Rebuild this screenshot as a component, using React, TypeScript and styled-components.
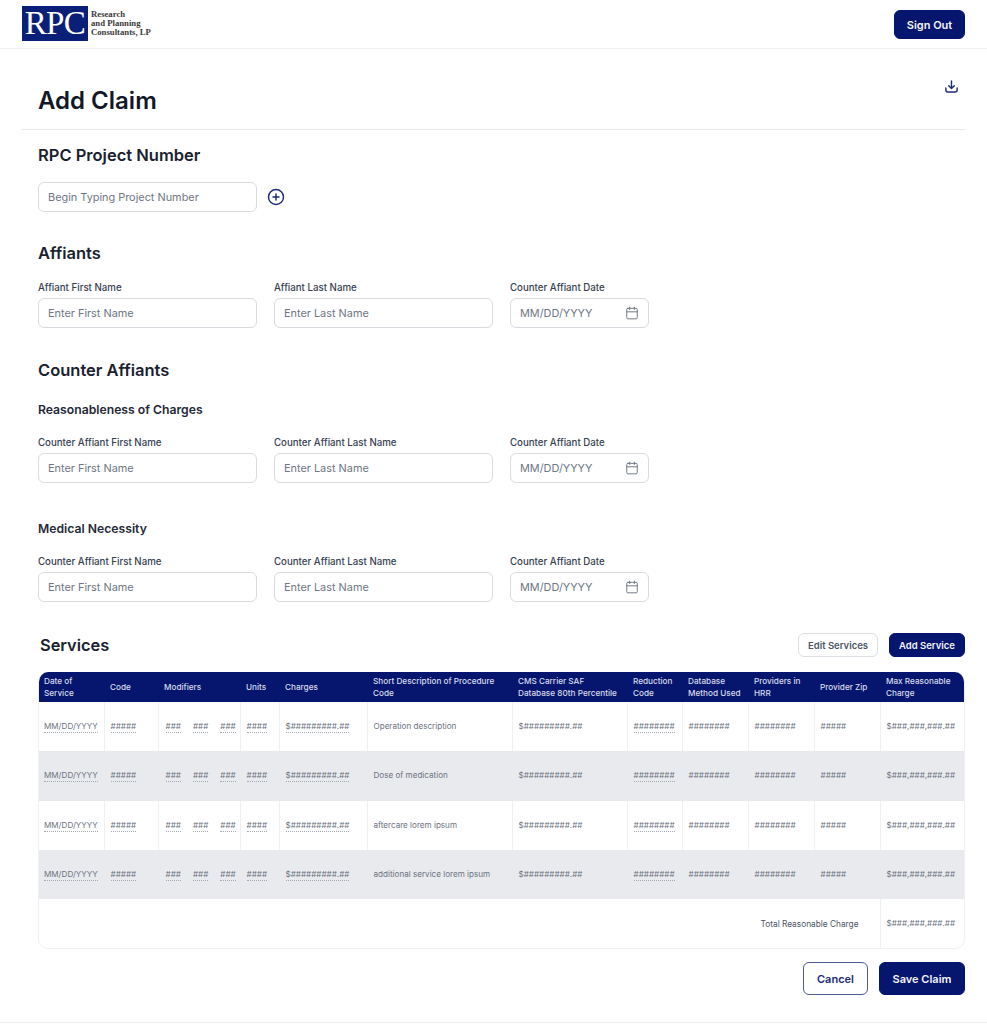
import React from 'react';
import styled, {createGlobalStyle} from 'styled-components';
import {Calendar, CirclePlus} from 'lucide-react';

const NAVY = '#06166e';

const GlobalStyle = createGlobalStyle`
  html, body { margin: 0; padding: 0; background: #fff; }
  body { font-family: Inter, "Noto Sans", sans-serif; color: #111827; }
  * { box-sizing: border-box; }
`;

const COLUMNS = [66, 54, 82, 39, 88, 145, 115, 55, 66, 66, 66, 85];

const HEADERS = [
  'Date of Service',
  'Code',
  'Modifiers',
  'Units',
  'Charges',
  'Short Description of Procedure Code',
  'CMS Carrier SAF Database 80th Percentile',
  'Reduction Code',
  'Database Method Used',
  'Providers in HRR',
  'Provider Zip',
  'Max Reasonable Charge',
];

const ROWS = [
  'Operation description',
  'Dose of medication',
  'aftercare lorem ipsum',
  'additional service lorem ipsum',
];

const TopBar = styled.header`
  height: 49px;
  padding: 1px 22px 0;
  display: flex;
  align-items: center;
  justify-content: space-between;
  border-bottom: 1px solid #f1f2f4;
`;

const Logo = styled.div`
  display: flex;
  align-items: center;
  gap: 3px;
  margin-top: -2px;
`;

const LogoMark = styled.div`
  width: 66px;
  height: 35px;
  background: #0a1f78;
  color: #fff;
  font: 400 33px/35px 'Liberation Serif', serif;
  text-align: center;
  letter-spacing: -0.6px;
`;

const LogoText = styled.div`
  font: 700 8.7px/9px 'Liberation Serif', serif;
  color: #3a3a3a;
  white-space: nowrap;
`;

const Button = styled.button<{$variant?: 'primary' | 'outline' | 'plain'; $w: number; $h: number; $size: number}>`
  width: ${p => p.$w}px;
  height: ${p => p.$h}px;
  padding: 0;
  border-radius: 6px;
  font-family: Inter, sans-serif;
  font-weight: 600;
  font-size: ${p => p.$size}px;
  background: ${p => (p.$variant === 'primary' || !p.$variant ? NAVY : '#fff')};
  color: ${p =>
    p.$variant === 'outline' ? '#1c2a78' : p.$variant === 'plain' ? '#4b5563' : '#f3f4fa'};
  border: 1px solid
    ${p => (p.$variant === 'outline' ? '#4f5a98' : p.$variant === 'plain' ? '#dcdfe4' : NAVY)};
`;

const Main = styled.main`
  padding: 0 22px;
`;

const TitleRow = styled.div`
  height: 81px;
  padding: 0 6px 0 16px;
  display: flex;
  align-items: center;
  justify-content: space-between;
  border-bottom: 1px solid #e8eaed;
`;

const PageTitle = styled.h1`
  margin: 24px 0 0;
  font-size: 24px;
  line-height: 32px;
  font-weight: 600;
  color: #111827;
`;

const ExportIcon = styled.svg`
  width: 15px;
  height: 15px;
  margin: 0 0 6px;
  color: #1c2a78;
`;

const Content = styled.div`
  padding: 0 0 0 16px;
`;

const SectionTitle = styled.h2<{$top: number}>`
  margin: ${p => p.$top}px 0 0;
  font-size: 16.5px;
  line-height: 22px;
  font-weight: 600;
  color: #1a2230;
`;

const SubTitle = styled.h3<{$top: number}>`
  margin: ${p => p.$top}px 0 0;
  font-size: 12.2px;
  line-height: 18px;
  font-weight: 600;
  color: #1f2937;
`;

const ProjectRow = styled.div`
  margin-top: 16px;
  display: flex;
  align-items: center;
  gap: 10px;
  color: #1c2a78;
`;

const FieldRow = styled.div<{$top: number}>`
  margin-top: ${p => p.$top}px;
  display: flex;
  gap: 17px;
`;

const Field = styled.label`
  display: flex;
  flex-direction: column;
  gap: 3px;
`;

const FieldLabel = styled.span`
  font-size: 9.7px;
  line-height: 14px;
  font-weight: 500;
  color: #374151;
`;

const InputBox = styled.div<{$w: number}>`
  position: relative;
  width: ${p => p.$w}px;
  height: 30px;
  color: #6b7280;
`;

const Input = styled.input`
  width: 100%;
  height: 100%;
  padding: 0 9px;
  border: 1px solid #d8dbe0;
  border-radius: 6px;
  background: #fff;
  font-family: Inter, sans-serif;
  font-size: 10.9px;
  color: #111827;
  &::placeholder {
    color: #6f7785;
    opacity: 1;
  }
`;

const InputIcon = styled.span`
  position: absolute;
  top: 8px;
  right: 10px;
  display: flex;
`;

const ServicesHead = styled.div`
  margin-top: 31px;
  height: 24px;
  display: flex;
  align-items: center;
  gap: 11px;
`;

const ServicesTitle = styled.h2`
  margin: 0 auto 0 2px;
  font-size: 16.4px;
  line-height: 24px;
  font-weight: 600;
  color: #1a2230;
`;

const TableWrap = styled.div`
  margin-top: 15px;
  border: 1px solid #eef0f2;
  border-top: 0;
  border-radius: 10px;
  overflow: hidden;
`;

const Table = styled.table`
  width: 927px;
  margin: 0 -1px;
  table-layout: fixed;
  border-collapse: collapse;
`;

const HeadCell = styled.th`
  height: 30px;
  padding: 0 6px;
  background: ${NAVY};
  color: #d9dcec;
  font-size: 8.2px;
  line-height: 12.5px;
  font-weight: 500;
  text-align: left;
`;

const BodyRow = styled.tr<{$shaded?: boolean}>`
  height: 49.3px;
  background: ${p => (p.$shaded ? '#e9eaee' : '#fff')};
`;

const Cell = styled.td<{$tint?: boolean}>`
  padding: 0 6px 1px;
  font-size: 8.1px;
  color: #6b7280;
  white-space: nowrap;
  border-left: 1px solid ${p => (p.$tint ? '#e9eaee' : '#eef0f2')};
  &:first-child {
    border-left: 0;
  }
`;

const Editable = styled.span`
  padding-bottom: 1px;
  border-bottom: 1px dotted #a3a9b5;
`;

const Modifiers = styled.div`
  margin: 2px 0 0 1px;
  display: flex;
  gap: 12px;
`;

const TotalLabel = styled.td`
  padding-right: 21px;
  font-size: 8.3px;
  color: #4b5563;
  text-align: right;
`;

const Actions = styled.div`
  margin-top: 13px;
  display: flex;
  justify-content: flex-end;
  gap: 11px;
`;

const PageEnd = styled.div`
  margin-top: 27px;
  border-bottom: 1px solid #eceef0;
`;

const DateField = ({label}: {label: string}) => (
  <Field>
    <FieldLabel>{label}</FieldLabel>
    <InputBox $w={139}>
      <Input placeholder="MM/DD/YYYY" />
      <InputIcon>
        <Calendar size={14} strokeWidth={1.6} />
      </InputIcon>
    </InputBox>
  </Field>
);

const TextField = ({label, placeholder}: {label: string; placeholder: string}) => (
  <Field>
    <FieldLabel>{label}</FieldLabel>
    <InputBox $w={219}>
      <Input placeholder={placeholder} />
    </InputBox>
  </Field>
);

const NameFields = ({prefix, top}: {prefix: string; top: number}) => (
  <FieldRow $top={top}>
    <TextField label={`${prefix} First Name`} placeholder="Enter First Name" />
    <TextField label={`${prefix} Last Name`} placeholder="Enter Last Name" />
    <DateField label="Counter Affiant Date" />
  </FieldRow>
);

const ServiceRow = ({description, shaded}: {description: string; shaded: boolean}) => (
  <BodyRow $shaded={shaded}>
    <Cell $tint={shaded}><Editable>MM/DD/YYYY</Editable></Cell>
    <Cell $tint={shaded}><Editable>#####</Editable></Cell>
    <Cell $tint={shaded}>
      <Modifiers>
        <Editable>###</Editable>
        <Editable>###</Editable>
        <Editable>###</Editable>
      </Modifiers>
    </Cell>
    <Cell $tint={shaded}><Editable>####</Editable></Cell>
    <Cell $tint={shaded}><Editable>$#########.##</Editable></Cell>
    <Cell $tint={shaded}>{description}</Cell>
    <Cell $tint={shaded}>$#########.##</Cell>
    <Cell $tint={shaded}><Editable>########</Editable></Cell>
    <Cell $tint={shaded}>########</Cell>
    <Cell $tint={shaded}>########</Cell>
    <Cell $tint={shaded}>#####</Cell>
    <Cell $tint={shaded}>$###,###,###.##</Cell>
  </BodyRow>
);

export default function App() {
  return (
    <>
      <GlobalStyle />
      <TopBar>
        <Logo>
          <LogoMark>RPC</LogoMark>
          <LogoText>
            Research
            <br />
            and Planning
            <br />
            Consultants, LP
          </LogoText>
        </Logo>
        <Button $w={71} $h={29} $size={11}>Sign Out</Button>
      </TopBar>
      <Main>
        <TitleRow>
          <PageTitle>Add Claim</PageTitle>
          <ExportIcon viewBox="0 0 16 16" fill="none" stroke="currentColor" strokeWidth="1.5" strokeLinecap="round" strokeLinejoin="round">
            <path d="M8 2v8M5 7.2 8 10.2l3-3" />
            <path d="M2 9.5v2.3A2 2 0 0 0 4 13.8h8a2 2 0 0 0 2-2V9.5" />
          </ExportIcon>
        </TitleRow>
        <Content>
          <SectionTitle $top={14}>RPC Project Number</SectionTitle>
          <ProjectRow>
            <InputBox $w={219}>
              <Input placeholder="Begin Typing Project Number" />
            </InputBox>
            <CirclePlus size={18} strokeWidth={1.9} />
          </ProjectRow>

          <SectionTitle $top={30}>Affiants</SectionTitle>
          <FieldRow $top={17}>
            <TextField label="Affiant First Name" placeholder="Enter First Name" />
            <TextField label="Affiant Last Name" placeholder="Enter Last Name" />
            <DateField label="Counter Affiant Date" />
          </FieldRow>

          <SectionTitle $top={31}>Counter Affiants</SectionTitle>
          <SubTitle $top={20}>Reasonableness of Charges</SubTitle>
          <NameFields prefix="Counter Affiant" top={17} />

          <SubTitle $top={37}>Medical Necessity</SubTitle>
          <NameFields prefix="Counter Affiant" top={17} />

          <ServicesHead>
            <ServicesTitle>Services</ServicesTitle>
            <Button $variant="plain" $w={80} $h={24} $size={9.5}>Edit Services</Button>
            <Button $w={76} $h={24} $size={9.5}>Add Service</Button>
          </ServicesHead>

          <TableWrap>
            <Table>
              <colgroup>
                {COLUMNS.map((width, i) => (
                  <col key={i} width={width} />
                ))}
              </colgroup>
              <thead>
                <tr>
                  {HEADERS.map(header => (
                    <HeadCell key={header}>{header}</HeadCell>
                  ))}
                </tr>
              </thead>
              <tbody>
                {ROWS.map((description, i) => (
                  <ServiceRow key={description} description={description} shaded={i % 2 === 1} />
                ))}
                <BodyRow>
                  <TotalLabel colSpan={11}>Total Reasonable Charge</TotalLabel>
                  <Cell>$###,###,###.##</Cell>
                </BodyRow>
              </tbody>
            </Table>
          </TableWrap>

          <Actions>
            <Button $variant="outline" $w={65} $h={33} $size={11}>Cancel</Button>
            <Button $w={86} $h={33} $size={11}>Save Claim</Button>
          </Actions>
        </Content>
      </Main>
      <PageEnd />
    </>
  );
}
